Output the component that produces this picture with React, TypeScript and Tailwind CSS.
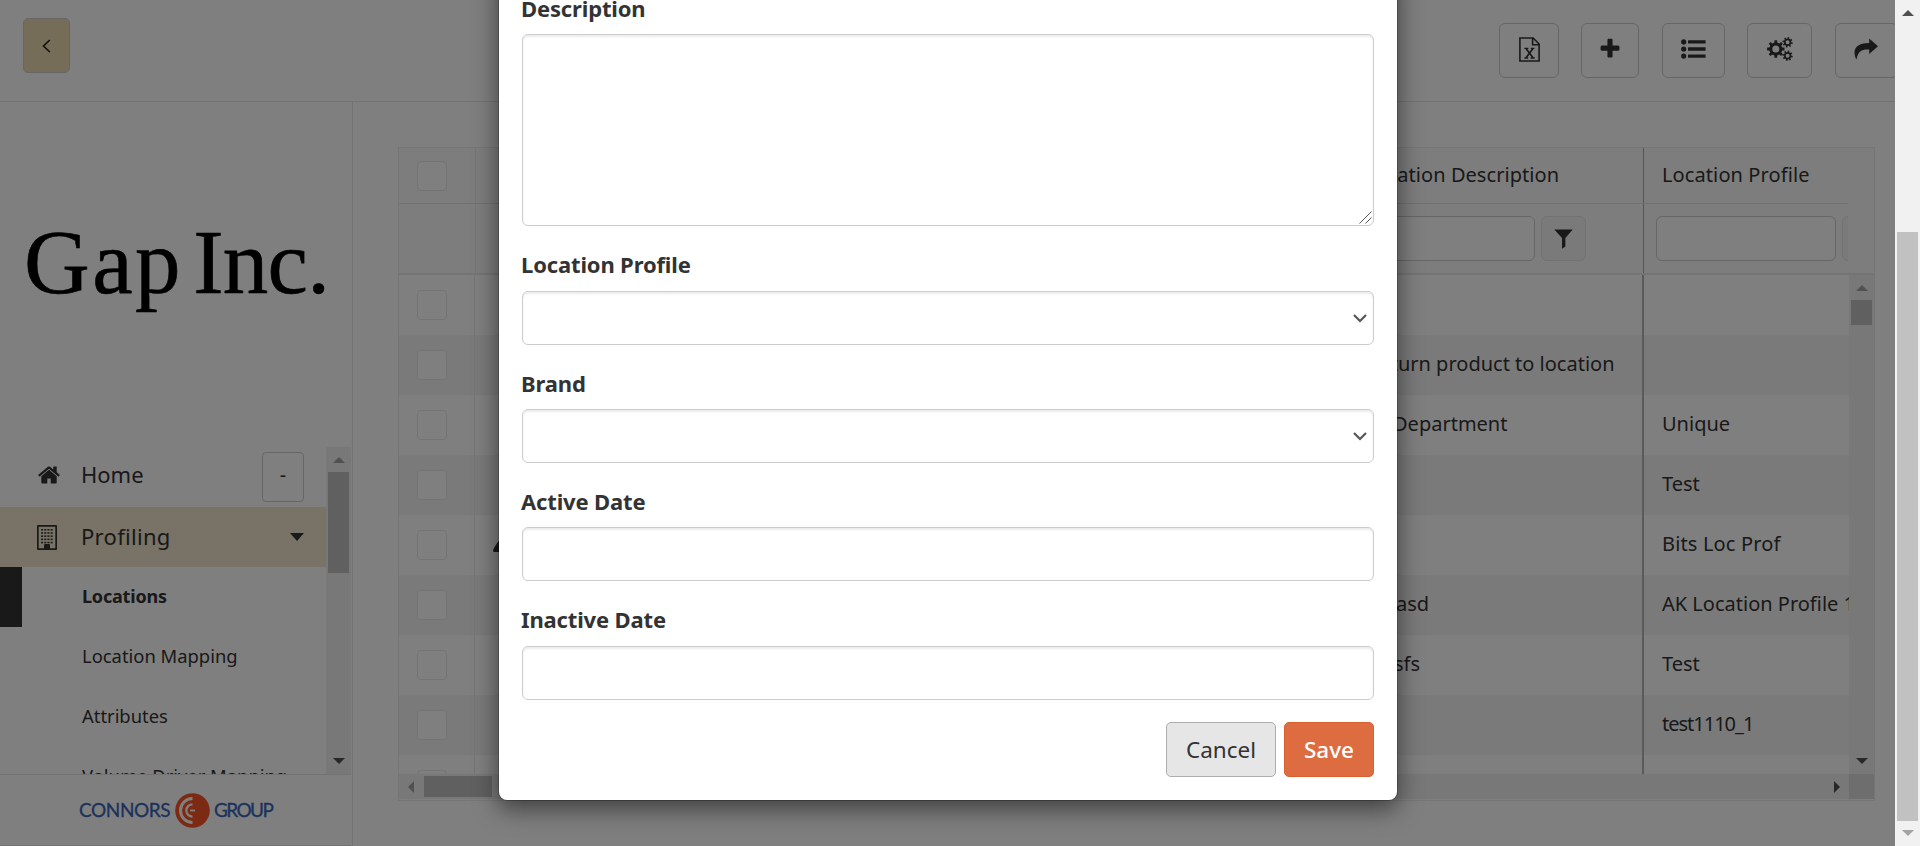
import React from "react";

const gear = (cx: number, cy: number, outer: number, inner: number, hole: number, teeth: number, phase = 0) => {
  const pts: string[] = [];
  const step = (Math.PI * 2) / teeth;
  for (let i = 0; i < teeth; i++) {
    const a = i * step + phase;
    const corners: [number, number][] = [
      [inner, a - step * 0.27],
      [outer, a - step * 0.2],
      [outer, a + step * 0.2],
      [inner, a + step * 0.27],
    ];
    corners.forEach(([r, t]) => pts.push(`${(cx + r * Math.cos(t)).toFixed(2)} ${(cy + r * Math.sin(t)).toFixed(2)}`));
  }
  return `M${pts.join("L")}Z M${cx - hole} ${cy}a${hole} ${hole} 0 1 0 ${hole * 2} 0a${hole} ${hole} 0 1 0 ${-hole * 2} 0Z`;
};

const ExcelIcon = () => (
  <svg width="21" height="25" viewBox="0 0 21 25" fill="none" stroke="#333" strokeWidth="1.6">
    <path d="M.9 1h13.2l6 6v17H.9zM13.6 1v6.8h6.5" />
    <path d="M7 11.6l7 9.2M14 11.6l-7 9.2" strokeWidth="1.7" />
    <path d="M5.4 11.4h4M11.8 11.4h3.6M5.4 21h3.8M11.6 21h4" strokeWidth="1.3" />
  </svg>
);

const PlusIcon = () => (
  <svg width="24" height="24" viewBox="0 0 1792 1792" fill="#333">
    <path d="M1600 736v192q0 40-28 68t-68 28h-416v416q0 40-28 68t-68 28h-192q-40 0-68-28t-28-68v-416h-416q-40 0-68-28t-28-68v-192q0-40 28-68t68-28h416v-416q0-40 28-68t68-28h192q40 0 68 28t28 68v416h416q40 0 68 28t28 68z" />
  </svg>
);

const ListIcon = () => (
  <svg width="25" height="20" viewBox="0 0 25 20" fill="#333">
    {[2.9, 10, 17.1].map((y) => (
      <g key={y}>
        <circle cx="2.7" cy={y} r="2.6" />
        <rect x="7" y={y - 1.7} width="17.6" height="3.4" rx=".5" />
      </g>
    ))}
  </svg>
);

const CogsIcon = () => (
  <svg width="26" height="24" viewBox="0 0 26 24" fill="#333" fillRule="evenodd">
    <path d={gear(8.8, 12, 8.8, 6.6, 3.5, 8)} />
    <path d={gear(20.6, 5.3, 5.2, 3.8, 2, 8, 0.2)} />
    <path d={gear(20.6, 18.7, 5.2, 3.8, 2, 8, 0.2)} />
  </svg>
);

const ShareIcon = () => (
  <svg width="24" height="22" viewBox="0 0 24 22" fill="#333">
    <path d="M15.2.6 24 8.2l-8.8 7.8v-4.4C8.500 11.200 4 12.500 2.500 21.500 1.800 20.500.4 17.500.5 14 .8 7.500 7 4.800 15.200 4.900z" />
  </svg>
);

const HomeIcon = () => (
  <svg width="24" height="24" viewBox="0 0 1792 1792" fill="#333">
    <path d="M1472 992v480q0 26-19 45t-45 19h-384v-384h-256v384h-384q-26 0-45-19t-19-45v-480q0-1 .5-3t.5-3l575-474 575 474q1 2 1 6zm223-69l-62 74q-8 9-21 11h-3q-13 0-21-7l-692-577-692 577q-12 8-24 7-13-2-21-11l-62-74q-8-10-7-23.500t11-21.500l719-599q32-26 76-26t76 26l244 204v-195q0-14 9-23t23-9h192q14 0 23 9t9 23v408l219 182q10 8 11 21.500t-7 23.500z" />
  </svg>
);

const BuildingIcon = () => (
  <svg width="20" height="25" viewBox="0 0 20 25" fill="#333">
    <path fillRule="evenodd" d="M1 0h18q1 0 1 1v23q0 1-1 1H1q-1 0-1-1V1Q0 0 1 0zm.700 1.700v21.600h16.600V1.700z" />
    {[4, 7.2, 10.400, 13.600, 16.800].map((y) =>
      [4, 7.2, 10.400, 13.600].map((x) => <rect key={`${x}-${y}`} x={x} y={y} width="2.100" height="1.500" />)
    )}
    <path d="M7 20q0-1 1-1h4q1 0 1 1v4H7z" />
  </svg>
);

const FilterIcon = () => (
  <svg width="19" height="20" viewBox="0 0 19 20" fill="#333">
    <path d="M.3.500h18.400L11.400 9v8.500L8 19.700V9z" />
  </svg>
);

const Arrow = ({ dir, className }: { dir: "up" | "down" | "left" | "right"; className: string }) => {
  const d = { up: "M6 0l6 6H0z", down: "M0 0h12L6 6z", left: "M6 0v12L0 6z", right: "M0 0l6 6-6 6z" }[dir];
  const flat = dir === "up" || dir === "down";
  return (
    <svg width={flat ? 12 : 6} height={flat ? 6 : 12} className={className}>
      <path d={d} fill="currentColor" />
    </svg>
  );
};

const toolButton = "flex h-[55px] shrink-0 items-center justify-center rounded-[6px] border border-[#ccc] pb-[3px]";

function Header() {
  return (
    <header className="flex h-[102px] shrink-0 items-start border-b border-[#e7e7e7]">
      <button className="mt-[18px] ml-[23px] flex h-[55px] w-[47px] items-center justify-center rounded-[5px] border border-[#ccc] bg-[#eadbb0]">
        <svg width="9" height="14" viewBox="0 0 9 14" fill="none" stroke="#222" strokeWidth="1.7">
          <path d="M7.800 1 1.500 7l6.300 6" />
        </svg>
      </button>
      <div className="mt-[23px] ml-auto flex w-[396px] overflow-hidden">
        <button className={`${toolButton} mr-[22px] w-[60px]`}><ExcelIcon /></button>
        <button className={`${toolButton} mr-[23px] w-[58px]`}><PlusIcon /></button>
        <button className={`${toolButton} mr-[22px] w-[63px]`}><ListIcon /></button>
        <button className={`${toolButton} mr-[23px] w-[65px]`}><CogsIcon /></button>
        <button className={`${toolButton} w-[63px] pr-[2px]`}><ShareIcon /></button>
      </div>
    </header>
  );
}

function Sidebar() {
  return (
    <aside className="flex w-[353px] shrink-0 flex-col border-r border-[#e7e7e7]">
      <div className="flex h-[345px] shrink-0 items-start pt-[106px] pl-[24px]">
        <div className="whitespace-nowrap font-['Liberation_Serif',serif] text-[91px] leading-[110px] text-black">
          <span className="tracking-[2.5px] [-webkit-text-stroke:0.6px_#000]">Gap</span>
          <span className="ml-[-12px] tracking-[-0.7px] [-webkit-text-stroke:0.6px_#000]"> Inc.</span>
        </div>
      </div>
      <div className="flex h-[327px] shrink-0">
        <nav className="w-[326px] overflow-hidden">
          <div className="flex h-[60px] items-center text-[22px]">
            <span className="ml-[37px] w-[44px] pb-[4px]"><HomeIcon /></span>
            <span className="pb-[6px]">Home</span>
            <button className="mr-[22px] ml-auto h-[50px] w-[42px] rounded-[4px] border border-[#ccc] pb-1 text-[20px]">-</button>
          </div>
          <div className="flex h-[60px] items-center bg-[#f0e6cc] text-[22px] tracking-[0.3px]">
            <span className="ml-[37px] w-[44px]"><BuildingIcon /></span>
            <span className="pb-[2px]">Profiling</span>
            <svg width="14" height="8" className="mr-[22px] ml-auto"><path d="M0 0h14L7 8z" fill="#333" /></svg>
          </div>
          <div className="flex h-[60px] items-center text-[18px] font-bold tracking-[-0.2px]">
            <span className="mr-[60px] h-full w-[22px] bg-[#333]" />
            <span className="pb-[2px]">Locations</span>
          </div>
          {["Location Mapping", "Attributes", "Volume Driver Mapping"].map((t) => (
            <div key={t} className="flex h-[60px] items-center pb-[2px] pl-[82px] text-[18.4px]">{t}</div>
          ))}
        </nav>
        <div className="flex w-[25px] flex-col items-center bg-[#f1f1f1]">
          <Arrow dir="up" className="mt-[10px] text-[#a3a3a3]" />
          <div className="mt-[9px] h-[101px] w-[21px] bg-[#c1c1c1]" />
          <Arrow dir="down" className="mt-auto mb-[10px] text-[#505050]" />
        </div>
      </div>
      <div className="mr-[1px] flex h-[72px] items-center border-y border-[#e7e7e7] pt-[1px] pl-[79px] font-[Lato,sans-serif] text-[19px] text-[#3865b8]">
        <span className="w-[96px] tracking-[-0.4px] [-webkit-text-stroke:0.3px_#3865b8]">CONNORS</span>
        <svg width="35" height="35" viewBox="0 0 35 35">
          <circle cx="17.500" cy="17.500" r="17.300" fill="#fa5528" />
          <g fill="none" stroke="#fff">
            <path d="M17.500 5.500a12 12 0 0 0 0 24" strokeWidth="3" />
            <path d="M17.500 11.300a6.200 6.200 0 0 0 0 12.400" strokeWidth="2.200" />
            <path d="M15 17.500h5" strokeWidth="1.800" />
          </g>
        </svg>
        <span className="ml-[4px] tracking-[-1.6px] [-webkit-text-stroke:0.3px_#3865b8]">GROUP</span>
      </div>
    </aside>
  );
}

const rows = [
  { desc: "", profile: "" },
  { desc: "Return product to location", profile: "", pad: "pl-[25px]" },
  { desc: "Department", profile: "Unique", pad: "pl-[51px]" },
  { desc: "", profile: "Test" },
  { desc: "", profile: "Bits Loc Prof", mark: true, tight: "tracking-[0.15px]" },
  { desc: "asd", profile: "AK Location Profile 1", pad: "pl-[54px]" },
  { desc: "sfs", profile: "Test", pad: "pl-[52px]" },
  { desc: "", profile: "test1110_1", tight: "tracking-[-1px]" },
  { desc: "", profile: "" },
];

const Check = () => <span className="h-[30px] w-[30px] rounded-[4px] border border-[#e9e9e9] bg-white" />;

function Grid() {
  return (
    <div className="mt-[45px] ml-[45px] flex h-[654px] w-[1477px] shrink-0 flex-col overflow-hidden border border-[#eaeaea] text-[20px]">
      <div className="flex h-[127px] shrink-0 border-b-2 border-[#e8e8e8] bg-[#fafafa]">
        <div className="flex w-[1449px] shrink-0 flex-col overflow-hidden">
          <div className="flex h-[56px] shrink-0 border-b border-[#e2e2e2]">
            <div className="flex w-[77px] shrink-0 items-center border-r border-[#eaeaea] pl-[18px]"><Check /></div>
            <div className="w-[867px] shrink-0" />
            <div className="flex w-[301px] shrink-0 items-center border-r border-[#aaa] pb-[1px] pl-[22px] tracking-[0.05px] whitespace-nowrap">Location Description</div>
            <div className="flex w-[300px] shrink-0 items-center pb-[1px] pl-[18px] tracking-[0.1px]">Location Profile</div>
          </div>
          <div className="flex h-[69px] shrink-0">
            <div className="w-[77px] shrink-0 border-r border-[#eaeaea]" />
            <div className="w-[867px] shrink-0" />
            <div className="flex w-[301px] shrink-0 items-center border-r border-[#aaa] pl-[12px]">
              <div className="h-[45px] w-[180px] rounded-[6px] border border-[#ccc] bg-white" />
              <div className="ml-[6px] flex h-[45px] w-[45px] items-center justify-center rounded-[6px] border border-[#e4e4e4] bg-[#f4f4f4]"><FilterIcon /></div>
            </div>
            <div className="flex w-[300px] shrink-0 items-center pl-[12px]">
              <div className="h-[45px] w-[180px] rounded-[6px] border border-[#ccc] bg-white" />
              <div className="ml-[6px] h-[45px] w-[45px] rounded-[6px] border border-[#e4e4e4] bg-[#f4f4f4]" />
            </div>
          </div>
        </div>
      </div>
      <div className="flex h-[499px] shrink-0">
        <div className="w-[1450px] overflow-hidden">
          {rows.map((r, i) => (
            <div key={i} className={`flex h-[60px] ${i % 2 ? "bg-[#f5f5f5]" : "bg-white"}`}>
              <div className="flex w-[76px] shrink-0 items-center border-r border-[#eaeaea] pl-[18px]"><Check /></div>
              <div className="flex w-[867px] shrink-0 items-center pl-[18px]">
                {r.mark && <svg width="22" height="14"><path d="M0 13Q0 10 8 0l14 14H1z" fill="#333" /></svg>}
              </div>
              <div className={`flex w-[302px] shrink-0 items-center border-r-2 border-[#b4b4b4] pb-[2px] whitespace-nowrap ${r.pad ?? ""}`}>{r.desc}</div>
              <div className={`flex w-[205px] shrink-0 items-center overflow-hidden pb-[2px] pl-[18px] whitespace-nowrap ${r.tight ?? ""}`}>{r.profile}</div>
            </div>
          ))}
        </div>
        <div className="flex w-[25px] flex-col items-center bg-[#f1f1f1]">
          <Arrow dir="up" className="mt-[10px] text-[#a3a3a3]" />
          <div className="mt-[9px] h-[25px] w-[21px] bg-[#c1c1c1]" />
          <Arrow dir="down" className="mt-auto mb-[10px] text-[#505050]" />
        </div>
      </div>
      <div className="flex h-[25px] shrink-0">
        <div className="flex w-[1450px] items-center bg-[#f1f1f1]">
          <Arrow dir="left" className="ml-[9px] text-[#a3a3a3]" />
          <div className="ml-[10px] h-[21px] w-[68px] bg-[#c1c1c1]" />
          <Arrow dir="right" className="mr-[9px] ml-auto text-[#505050]" />
        </div>
        <div className="w-[25px] bg-[#dcdcdc]" />
      </div>
    </div>
  );
}

const control =
  "block w-full rounded-[6px] border border-[#ccc] bg-white shadow-[inset_0_2px_2px_rgba(0,0,0,0.075)] outline-none";

const Label = ({ children, tall }: { children: string; tall?: boolean }) => (
  <label className={`-ml-px flex items-center pt-[12px] text-[22px] font-bold tracking-[-0.15px] text-[#333] ${tall ? "h-[65px]" : "h-[64px]"}`}>
    {children}
  </label>
);

const Select = () => (
  <div className="relative">
    <select className={`${control} h-[54px] appearance-none`} />
    <svg width="14" height="9" viewBox="0 0 14 9" fill="none" stroke="#555" strokeWidth="2.200" className="absolute top-[23px] right-[7px]">
      <path d="M1 1l6 6 6-6" />
    </svg>
  </div>
);

function Modal() {
  return (
    <div className="absolute top-[-31px] left-[498px] w-[900px] rounded-[9px] border border-black/20 bg-white bg-clip-padding px-[23px] pb-[23px] shadow-[0_8px_24px_rgba(0,0,0,0.5)]">
      <Label>Description</Label>
      <div className="relative">
        <textarea className={`${control} h-[192px] resize-none`} />
        <svg width="13" height="13" viewBox="0 0 13 13" fill="none" stroke="#555" className="absolute right-[2px] bottom-[2px]">
          <path d="M.5 12.500l12-12M6.500 12.500l6-6" />
        </svg>
      </div>
      <Label tall>Location Profile</Label>
      <Select />
      <Label>Brand</Label>
      <Select />
      <Label>Active Date</Label>
      <input className={`${control} h-[54px]`} />
      <Label tall>Inactive Date</Label>
      <input className={`${control} h-[54px]`} />
      <div className="mt-[22px] flex justify-end gap-[8px] text-[22.5px]">
        <button className="h-[55px] w-[110px] rounded-[5px] border border-[#adadad] bg-[#e6e6e6] text-[#333]">Cancel</button>
        <button className="h-[55px] w-[90px] rounded-[5px] border border-[#d9602f] bg-[#dd6d40] font-medium text-white">Save</button>
      </div>
    </div>
  );
}

export default function App() {
  return (
    <div className="flex h-[846px] w-full overflow-hidden bg-white font-['Noto_Sans',sans-serif] text-[#333]">
      <div className="relative flex w-[1895px] shrink-0 flex-col overflow-hidden">
        <Header />
        <div className="flex flex-1">
          <Sidebar />
          <Grid />
        </div>
        <div className="absolute inset-0 bg-black/50" />
        <Modal />
      </div>
      <div className="flex w-[25px] shrink-0 flex-col items-center bg-[#f1f1f1]">
        <Arrow dir="up" className="mt-[10px] text-[#505050]" />
        <div className="mt-[216px] h-[589px] w-[21px] bg-[#c1c1c1]" />
        <Arrow dir="down" className="mt-[9px] text-[#a3a3a3]" />
      </div>
    </div>
  );
}
